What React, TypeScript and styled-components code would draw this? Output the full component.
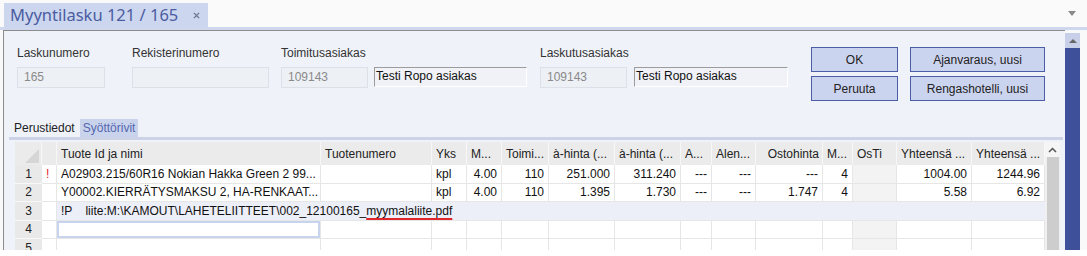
import React from 'react'
import styled, { createGlobalStyle } from 'styled-components'

const GlobalStyle = createGlobalStyle`
  html, body {
    margin: 0;
    padding: 0;
    background: #fff;
  }
  body {
    font-family: 'Liberation Sans', Arial, sans-serif;
    font-size: 12px;
    color: #222;
  }
`

const COLS = [27, 15, 264, 111, 35, 35, 47, 66, 66, 31, 44, 67, 30, 44, 75, 73]

const HEADERS = [
  'Tuote Id ja nimi',
  'Tuotenumero',
  'Yks',
  'M...',
  'Toimi...',
  'à-hinta (...',
  'à-hinta (...',
  'A...',
  'Alen...',
  'Ostohinta',
  'M...',
  'OsTi',
  'Yhteensä ...',
  'Yhteensä ...',
]

// column alignment for data cells, from "Tuote Id ja nimi" onwards
const ALIGN: ('left' | 'right')[] = [
  'left', 'left', 'left', 'right', 'right', 'right', 'right',
  'right', 'right', 'right', 'right', 'right', 'right', 'right',
]
const OSTI = 11

const ROWS = [
  {
    warn: true,
    cells: [
      'A02903.215/60R16 Nokian Hakka Green 2 99...', '', 'kpl', '4.00', '110',
      '251.000', '311.240', '---', '---', '---', '4', '', '1004.00', '1244.96',
    ],
  },
  {
    warn: false,
    cells: [
      'Y00002.KIERRÄTYSMAKSU 2, HA-RENKAAT...', '', 'kpl', '4.00', '110',
      '1.395', '1.730', '---', '---', '1.747', '4', '', '5.58', '6.92',
    ],
  },
]

const Page = styled.div`
  height: 250px;
  display: flex;
  flex-direction: column;
  background: #f9f9f9;
`

const TabStrip = styled.div`
  height: 27px;
  display: flex;
  align-items: flex-end;
  padding-left: 4px;
  background: #fafafa;
  border-bottom: 3px solid #cfd7ee;
`

const DocTab = styled.div`
  height: 24px;
  display: flex;
  align-items: center;
  gap: 15px;
  padding: 0 8px 0 6px;
  background: #ccd6ef;
  color: #4b5ca0;
  font-family: 'Noto Sans', 'Open Sans', sans-serif;
  font-size: 16.5px;
  line-height: 24px;
`

const DropArrow = styled.div`
  margin: 0 11px 0 auto;
  align-self: center;
  width: 0;
  height: 0;
  border-left: 4px solid transparent;
  border-right: 4px solid transparent;
  border-top: 5px solid #8a8a8a;
`

const Body = styled.div`
  flex: 1;
  display: flex;
  padding-left: 3px;
  min-height: 0;
`

const Panel = styled.div`
  flex: 1;
  min-width: 0;
  display: flex;
  flex-direction: column;
  background: #eff2f9;
  border-left: 1px solid #8c8c8c;
  border-top: 1px solid #8c8c8c;
`

const FormArea = styled.div`
  display: flex;
  align-items: flex-start;
  padding: 15px 0 0 13px;
`

const Field = styled.div<{ $ml?: number }>`
  display: flex;
  flex-direction: column;
  margin-left: ${(p) => p.$ml ?? 0}px;
`

const Label = styled.div`
  line-height: 14px;
  margin-bottom: 7px;
  color: #333;
`

const FieldRow = styled.div<{ $gap: number }>`
  display: flex;
  gap: ${(p) => p.$gap}px;
`

const ReadBox = styled.div<{ $w: number }>`
  box-sizing: border-box;
  width: ${(p) => p.$w}px;
  height: 21px;
  border: 1px solid #dde0e8;
  background: #edf0f5;
  color: #8a8a8a;
  padding-left: 6px;
  line-height: 19px;
`

const NameBox = styled.div<{ $w: number }>`
  box-sizing: border-box;
  width: ${(p) => p.$w}px;
  height: 20px;
  border-top: 1px solid #9c9c9c;
  border-left: 1px solid #9c9c9c;
  border-bottom: 1px solid #fff;
  border-right: 1px solid #fff;
  background: #f0f2f7;
  color: #111;
  padding: 1px 1px;
  line-height: 14px;
`

const ButtonGrid = styled.div`
  display: grid;
  grid-template-columns: 87px 135px;
  column-gap: 12px;
  row-gap: 4px;
  margin: 1px 0 0 23px;
`

const Button = styled.button`
  box-sizing: border-box;
  height: 25px;
  border: 1px solid #4a5da5;
  background: #cbd4ee;
  color: #222;
  font-family: 'Liberation Sans', Arial, sans-serif;
  font-size: 12px;
  padding: 0;
`

const SubTabs = styled.div`
  display: flex;
  margin: 18px 2px 0 5px;
  border-bottom: 3px solid #cdd3e7;
`

const SubTab = styled.div<{ $active?: boolean }>`
  line-height: 18px;
  padding: 0 ${(p) => (p.$active ? 3 : 5)}px;
  background: ${(p) => (p.$active ? '#c9d3ec' : 'transparent')};
  color: ${(p) => (p.$active ? '#5668b0' : '#222')};
`

const GridWrap = styled.div`
  flex: 1;
  min-height: 0;
  display: flex;
  margin: 2px 5px 0 11px;
  overflow: hidden;
  background: #fff;
`

const Table = styled.div`
  display: grid;
  grid-template-columns: ${COLS.map((c) => `${c}px`).join(' ')};
  grid-template-rows: 23px;
  grid-auto-rows: 18.5px;
  align-content: start;
  width: ${COLS.reduce((a, b) => a + b, 0)}px;
  color: #111;
`

const HeadCell = styled.div<{ $align?: 'left' | 'right' }>`
  box-sizing: border-box;
  display: flex;
  align-items: center;
  justify-content: ${(p) => (p.$align === 'right' ? 'flex-end' : 'flex-start')};
  padding: 0 ${(p) => (p.$align === 'right' ? 3 : 4)}px 0 4px;
  background: #ebebeb;
  border-right: 1px solid #f7f7f7;
  color: #222;
  white-space: nowrap;
  overflow: hidden;
`

const Corner = styled(HeadCell)`
  align-items: flex-end;
  justify-content: flex-end;
  padding: 0 2px 2px 0;
`

const RowHead = styled.div`
  box-sizing: border-box;
  display: flex;
  align-items: center;
  justify-content: center;
  background: #e9e9e9;
  border-bottom: 1px solid #f8f8f8;
  color: #222;
`

const Cell = styled.div<{ $align?: 'left' | 'right'; $shade?: boolean; $focus?: boolean }>`
  box-sizing: border-box;
  display: flex;
  align-items: center;
  justify-content: ${(p) => (p.$align === 'right' ? 'flex-end' : 'flex-start')};
  padding: 0 4px;
  background: ${(p) => (p.$shade ? '#f3f3f3' : '#fff')};
  border-right: 1px solid #e6e6e6;
  border-bottom: 1px solid #e6e6e6;
  box-shadow: ${(p) => (p.$focus ? 'inset 0 0 0 2px #c8d3ee' : 'none')};
  white-space: nowrap;
  overflow: hidden;
`

const Warn = styled.span`
  color: #e3262b;
`

const NoteCell = styled.div`
  grid-column: span 14;
  box-sizing: border-box;
  display: flex;
  align-items: center;
  padding-left: 4px;
  background: #eceef8;
  border-bottom: 1px solid #e6e6e6;
  white-space: pre;
  overflow: hidden;
`

const Misspelled = styled.span`
  text-decoration: underline;
  text-decoration-color: #e0262a;
  text-decoration-thickness: 2px;
  text-underline-offset: 3px;
`

const VScroll = styled.div`
  width: 15px;
  display: flex;
  flex-direction: column;
  background: #f0f0f0;
`

const ScrollButton = styled.div`
  height: 15px;
  display: flex;
  align-items: center;
  justify-content: center;
  background: #f5f5f5;
`

const Thumb = styled.div`
  flex: 1;
  margin: 0 1px 0 2px;
  background: #cdcdcd;
`

const OuterScroll = styled.div`
  width: 15px;
  margin: 3px 7px 0 0;
  display: flex;
  flex-direction: column;
  background: #3d5099;
`

const OuterButton = styled.div`
  height: 15px;
  display: flex;
  align-items: center;
  justify-content: center;
  background: #c7cfe9;
`

const UpTriangle = styled.div`
  width: 0;
  height: 0;
  border-left: 4px solid transparent;
  border-right: 4px solid transparent;
  border-bottom: 4px solid #666;
`

const CloseIcon = () => (
  <svg width="7" height="7" viewBox="0 0 8 8">
    <path d="M1 1 L7 7 M7 1 L1 7" stroke="#6b7088" strokeWidth="1.4" />
  </svg>
)

const CornerMark = () => (
  <svg width="14" height="14" viewBox="0 0 14 14">
    <polygon points="14,0 14,14 0,14" fill="#d6d6d6" />
  </svg>
)

const Chevron = () => (
  <svg width="9" height="6" viewBox="0 0 9 6">
    <path d="M1 5 L4.5 1.5 L8 5" fill="none" stroke="#555" strokeWidth="1.5" />
  </svg>
)

export default function App() {
  return (
    <>
      <GlobalStyle />
      <Page>
        <TabStrip>
          <DocTab>
            <span>Myyntilasku 121 / 165</span>
            <CloseIcon />
          </DocTab>
          <DropArrow />
        </TabStrip>
        <Body>
          <Panel>
            <FormArea>
              <Field>
                <Label>Laskunumero</Label>
                <ReadBox $w={88}>165</ReadBox>
              </Field>
              <Field $ml={27}>
                <Label>Rekisterinumero</Label>
                <ReadBox $w={137} />
              </Field>
              <Field $ml={12}>
                <Label>Toimitusasiakas</Label>
                <FieldRow $gap={6}>
                  <ReadBox $w={87}>109143</ReadBox>
                  <NameBox $w={153}>Testi Ropo asiakas</NameBox>
                </FieldRow>
              </Field>
              <Field $ml={13}>
                <Label>Laskutusasiakas</Label>
                <FieldRow $gap={7}>
                  <ReadBox $w={87}>109143</ReadBox>
                  <NameBox $w={154}>Testi Ropo asiakas</NameBox>
                </FieldRow>
              </Field>
              <ButtonGrid>
                <Button>OK</Button>
                <Button>Ajanvaraus, uusi</Button>
                <Button>Peruuta</Button>
                <Button>Rengashotelli, uusi</Button>
              </ButtonGrid>
            </FormArea>

            <SubTabs>
              <SubTab>Perustiedot</SubTab>
              <SubTab $active>Syöttörivit</SubTab>
            </SubTabs>

            <GridWrap>
              <Table>
                <Corner>
                  <CornerMark />
                </Corner>
                <HeadCell />
                {HEADERS.map((h, i) => (
                  <HeadCell key={i} $align={h === 'Ostohinta' ? 'right' : 'left'}>
                    {h}
                  </HeadCell>
                ))}

                {ROWS.map((row, r) => (
                  <React.Fragment key={r}>
                    <RowHead>{r + 1}</RowHead>
                    <Cell>{row.warn && <Warn>!</Warn>}</Cell>
                    {row.cells.map((c, i) => (
                      <Cell key={i} $align={ALIGN[i]} $shade={i === OSTI}>
                        {c}
                      </Cell>
                    ))}
                  </React.Fragment>
                ))}

                <RowHead>3</RowHead>
                <Cell />
                <NoteCell>
                  {'!P    liite:M:\\KAMOUT\\LAHETELIITTEET\\002_12100165_'}
                  <Misspelled>myymalaliite.pdf</Misspelled>
                </NoteCell>

                {[4, 5].map((n) => (
                  <React.Fragment key={n}>
                    <RowHead>{n}</RowHead>
                    <Cell />
                    {ALIGN.map((a, i) => (
                      <Cell key={i} $align={a} $shade={i === OSTI} $focus={n === 4 && i === 0} />
                    ))}
                  </React.Fragment>
                ))}
              </Table>
              <VScroll>
                <ScrollButton>
                  <Chevron />
                </ScrollButton>
                <Thumb />
              </VScroll>
            </GridWrap>
          </Panel>
          <OuterScroll>
            <OuterButton>
              <UpTriangle />
            </OuterButton>
          </OuterScroll>
        </Body>
      </Page>
    </>
  )
}
